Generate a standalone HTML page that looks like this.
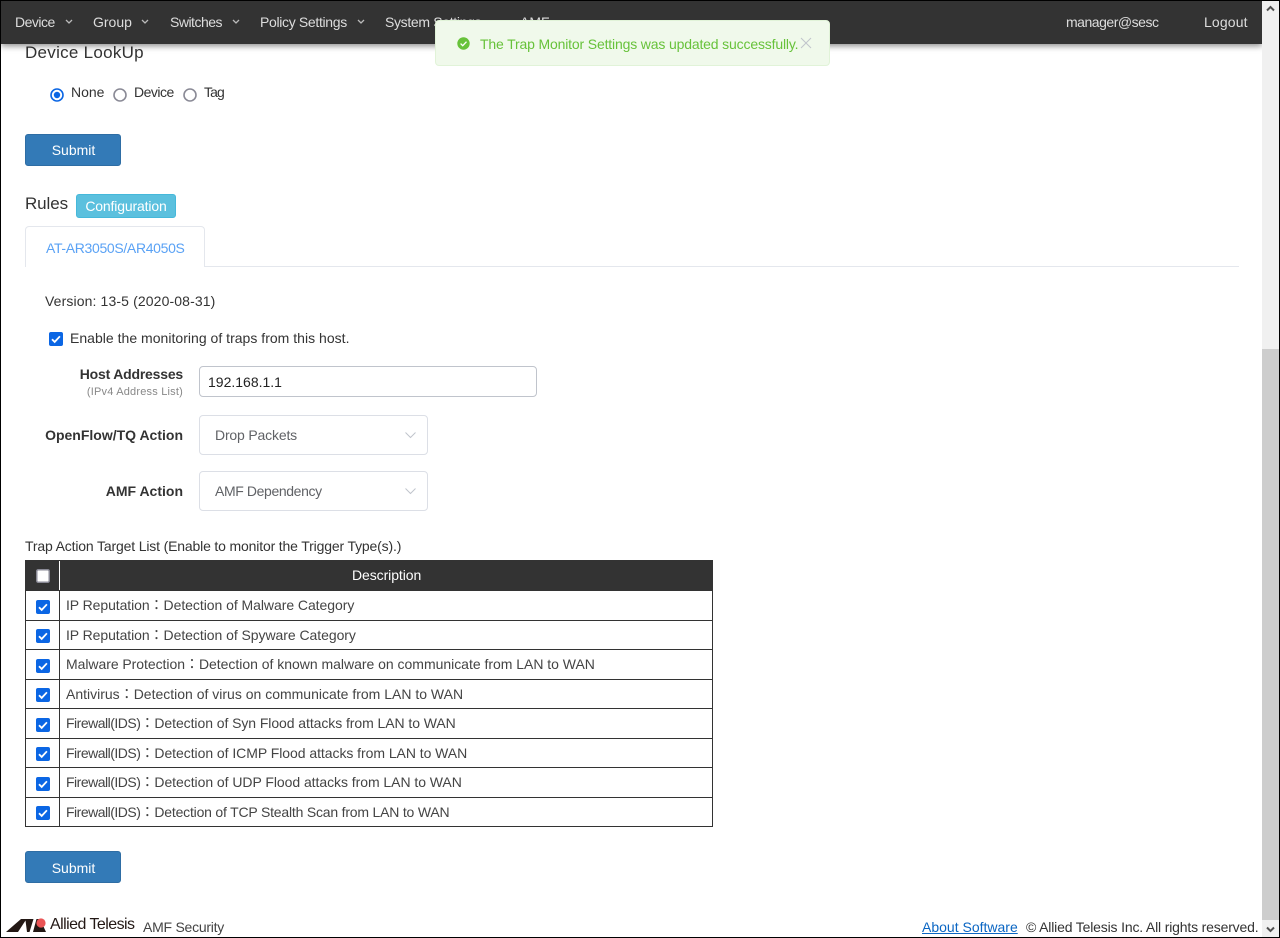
<!DOCTYPE html>
<html lang="en">
<head>
<meta charset="utf-8">
<title>AMF Security</title>
<style>
html,body{margin:0;padding:0;background:#fff;}
body{width:1280px;height:938px;position:relative;overflow:hidden;font-family:"Liberation Sans","Noto Sans CJK JP",sans-serif;font-size:14px;color:#333;}
.t{position:absolute;white-space:nowrap;line-height:20px;height:20px;}
.b{position:absolute;box-sizing:border-box;}
.nav{color:#ddd;top:12px;}
.btn{position:absolute;left:25px;width:96px;height:32px;box-sizing:border-box;background:#337ab7;border:1px solid #2e6da4;border-radius:3px;color:#fff;text-align:center;line-height:30px;padding-left:1px;}
.sel{position:absolute;left:199px;width:229px;height:40px;box-sizing:border-box;border:1px solid #dcdfe6;border-radius:4px;}
.row{position:absolute;left:25px;width:688px;height:1px;background:#333;}
.cb{position:absolute;left:36px;width:14px;height:14px;}
.rt{position:absolute;left:66px;white-space:nowrap;line-height:20px;color:#444;}
.c{display:inline-block;width:14px;text-align:center;}
.fw{letter-spacing:-.5px;}
svg{position:absolute;overflow:visible;}
</style>
</head>
<body>
<!-- device lookup sits under the fixed bar -->
<span class="t" style="left:25px;top:43px;font-size:17px;color:#333;letter-spacing:.28px;">Device LookUp</span>

<!-- top bar -->
<div class="b" style="left:1px;top:1px;width:1261px;height:43px;background:#333;box-shadow:0 2px 6px rgba(0,0,0,.45);"></div>
<span class="t nav" style="left:15px;letter-spacing:-.5px;">Device</span>
<svg style="left:65px;top:19px" width="8" height="6"><path d="M1 1l3 3 3-3" fill="none" stroke="#bbb" stroke-width="1.3"/></svg>
<span class="t nav" style="left:93px;">Group</span>
<svg style="left:141px;top:19px" width="8" height="6"><path d="M1 1l3 3 3-3" fill="none" stroke="#bbb" stroke-width="1.3"/></svg>
<span class="t nav" style="left:170px;letter-spacing:-.5px;">Switches</span>
<svg style="left:232px;top:19px" width="8" height="6"><path d="M1 1l3 3 3-3" fill="none" stroke="#bbb" stroke-width="1.3"/></svg>
<span class="t nav" style="left:260px;letter-spacing:-.33px;">Policy Settings</span>
<svg style="left:357px;top:19px" width="8" height="6"><path d="M1 1l3 3 3-3" fill="none" stroke="#bbb" stroke-width="1.3"/></svg>
<span class="t nav" style="left:385px;letter-spacing:-.33px;">System Settings</span>
<span class="t nav" style="left:520px;">AMF</span>
<span class="t nav" style="left:1066px;letter-spacing:-.48px;">manager@sesc</span>
<span class="t nav" style="left:1204px;letter-spacing:.15px;">Logout</span>

<!-- toast -->
<div class="b" style="left:435px;top:20px;width:395px;height:46px;background:#f0f9eb;border:1px solid #e1f3d8;border-radius:4px;"></div>
<svg style="left:457px;top:37px" width="13" height="13" viewBox="0 0 13 13"><circle cx="6.5" cy="6.5" r="6.2" fill="#67c23a"/><path d="M3.6 6.6l2.1 2.1 3.8-4" fill="none" stroke="#fff" stroke-width="1.3"/></svg>
<span class="t" style="left:480px;top:34px;color:#67c23a;letter-spacing:-.16px;">The Trap Monitor Settings was updated successfully.</span>
<svg style="left:801px;top:38px" width="10" height="10"><path d="M0 0l10 10M10 0L0 10" stroke="#c0c4cc" stroke-width="1"/></svg>

<!-- device lookup controls -->
<svg style="left:50px;top:88px" width="14" height="14"><circle cx="7" cy="7" r="6" fill="#fff" stroke="#0b66e4" stroke-width="1.6"/><circle cx="7" cy="7" r="3.2" fill="#0b66e4"/></svg>
<span class="t" style="left:71px;top:82px;">None</span>
<svg style="left:113px;top:88px" width="14" height="14"><circle cx="7" cy="7" r="6" fill="#fff" stroke="#8a8a96" stroke-width="1.6"/></svg>
<span class="t" style="left:134px;top:82px;letter-spacing:-.5px;">Device</span>
<svg style="left:183px;top:88px" width="14" height="14"><circle cx="7" cy="7" r="6" fill="#fff" stroke="#8a8a96" stroke-width="1.6"/></svg>
<span class="t" style="left:204px;top:82px;letter-spacing:-.9px;">Tag</span>
<div class="btn" style="top:134px;">Submit</div>

<!-- rules -->
<span class="t" style="left:25px;top:194px;font-size:17px;letter-spacing:-.1px;">Rules</span>
<div class="b" style="left:76px;top:194px;width:100px;height:24px;background:#5bc0de;border:1px solid #46b8da;border-radius:3px;color:#fff;text-align:center;line-height:22px;letter-spacing:-.15px;">Configuration</div>
<div class="b" style="left:25px;top:266px;width:1214px;height:1px;background:#e4e7ed;"></div>
<div class="b" style="left:25px;top:226px;width:180px;height:41px;background:#fff;border:1px solid #e4e7ed;border-bottom:0;border-radius:4px 4px 0 0;"></div>
<span class="t" style="left:46px;top:238px;color:#5aa2f5;letter-spacing:-.33px;">AT-AR3050S/AR4050S</span>
<span class="t" style="left:45px;top:291px;letter-spacing:.12px;">Version: 13-5 (2020-08-31)</span>

<svg style="left:49px;top:332px" width="14" height="14" viewBox="0 0 14 14"><rect width="14" height="14" rx="2" fill="#0b66e4"/><path d="M3 7.2l2.7 2.7 5.2-5.6" fill="none" stroke="#fff" stroke-width="1.8"/></svg>
<span class="t" style="left:70px;top:328px;letter-spacing:.02px;">Enable the monitoring of traps from this host.</span>

<span class="t" style="right:1097px;top:364px;font-weight:bold;letter-spacing:-.2px;">Host Addresses</span>
<span class="t" style="right:1097px;top:382px;font-size:11px;color:#888;letter-spacing:.2px;">(IPv4 Address List)</span>
<div class="b" style="left:199px;top:366px;width:338px;height:31px;border:1px solid #c0c4cc;border-radius:4px;"></div>
<span class="t" style="left:208px;top:372px;font-size:14px;color:#222;">192.168.1.1</span>

<span class="t" style="right:1097px;top:425px;font-weight:bold;">OpenFlow/TQ Action</span>
<div class="sel" style="top:415px;"></div>
<span class="t" style="left:215px;top:425px;color:#606266;letter-spacing:-.17px;">Drop Packets</span>
<svg style="left:405px;top:432px" width="11" height="7"><path d="M.5 .5l5 5 5-5" fill="none" stroke="#c0c4cc" stroke-width="1"/></svg>

<span class="t" style="right:1097px;top:481px;font-weight:bold;">AMF Action</span>
<div class="sel" style="top:471px;"></div>
<span class="t" style="left:215px;top:481px;color:#606266;letter-spacing:-.38px;">AMF Dependency</span>
<svg style="left:405px;top:488px" width="11" height="7"><path d="M.5 .5l5 5 5-5" fill="none" stroke="#c0c4cc" stroke-width="1"/></svg>

<!-- table -->
<span class="t" style="left:25px;top:536px;letter-spacing:-.16px;">Trap Action Target List (Enable to monitor the Trigger Type(s).)</span>
<div class="b" style="left:25px;top:560px;width:688px;height:31px;background:#333;"></div>
<div class="b" style="left:59px;top:561px;width:1px;height:29px;background:#fff;"></div>
<div class="b" style="left:25px;top:590px;width:1px;height:237px;background:#333;"></div>
<div class="b" style="left:59px;top:590px;width:1px;height:237px;background:#333;"></div>
<div class="b" style="left:712px;top:590px;width:1px;height:237px;background:#333;"></div>
<div class="row" style="top:620px;"></div>
<div class="row" style="top:649px;"></div>
<div class="row" style="top:679px;"></div>
<div class="row" style="top:708px;"></div>
<div class="row" style="top:738px;"></div>
<div class="row" style="top:767px;"></div>
<div class="row" style="top:797px;"></div>
<div class="row" style="top:826px;"></div>
<svg class="cb" style="top:569px" viewBox="0 0 14 14"><rect x=".75" y=".75" width="12.5" height="12.5" rx="1.5" fill="#fff" stroke="#8a8a96" stroke-width="1.5"/></svg>
<span class="t" style="left:352px;top:565px;color:#fff;letter-spacing:-.08px;">Description</span>

<svg class="cb" style="top:600px" viewBox="0 0 14 14"><rect width="14" height="14" rx="2" fill="#0b66e4"/><path d="M3 7.2l2.7 2.7 5.2-5.6" fill="none" stroke="#fff" stroke-width="1.8"/></svg>
<span class="rt" style="top:595px;"><span style="letter-spacing:-.08px;">IP Reputation</span><span class="c">：</span><span style="letter-spacing:-.05px;">Detection of Malware Category</span></span>
<svg class="cb" style="top:629px" viewBox="0 0 14 14"><rect width="14" height="14" rx="2" fill="#0b66e4"/><path d="M3 7.2l2.7 2.7 5.2-5.6" fill="none" stroke="#fff" stroke-width="1.8"/></svg>
<span class="rt" style="top:625px;"><span style="letter-spacing:-.08px;">IP Reputation</span><span class="c">：</span><span style="letter-spacing:-.05px;">Detection of Spyware Category</span></span>
<svg class="cb" style="top:659px" viewBox="0 0 14 14"><rect width="14" height="14" rx="2" fill="#0b66e4"/><path d="M3 7.2l2.7 2.7 5.2-5.6" fill="none" stroke="#fff" stroke-width="1.8"/></svg>
<span class="rt" style="top:654px;"><span style="letter-spacing:-.05px;">Malware Protection</span><span class="c">：</span><span style="letter-spacing:-.02px;">Detection of known malware on communicate from LAN to WAN</span></span>
<svg class="cb" style="top:688px" viewBox="0 0 14 14"><rect width="14" height="14" rx="2" fill="#0b66e4"/><path d="M3 7.2l2.7 2.7 5.2-5.6" fill="none" stroke="#fff" stroke-width="1.8"/></svg>
<span class="rt" style="top:684px;">Antivirus<span class="c">：</span>Detection of virus on communicate from LAN to WAN</span>
<svg class="cb" style="top:718px" viewBox="0 0 14 14"><rect width="14" height="14" rx="2" fill="#0b66e4"/><path d="M3 7.2l2.7 2.7 5.2-5.6" fill="none" stroke="#fff" stroke-width="1.8"/></svg>
<span class="rt" style="top:713px;"><span class="fw">Firewall(IDS)</span><span class="c">：</span><span style="letter-spacing:-.07px;">Detection of Syn Flood attacks from LAN to WAN</span></span>
<svg class="cb" style="top:747px" viewBox="0 0 14 14"><rect width="14" height="14" rx="2" fill="#0b66e4"/><path d="M3 7.2l2.7 2.7 5.2-5.6" fill="none" stroke="#fff" stroke-width="1.8"/></svg>
<span class="rt" style="top:743px;"><span class="fw">Firewall(IDS)</span><span class="c">：</span><span style="letter-spacing:-.05px;">Detection of ICMP Flood attacks from LAN to WAN</span></span>
<svg class="cb" style="top:777px" viewBox="0 0 14 14"><rect width="14" height="14" rx="2" fill="#0b66e4"/><path d="M3 7.2l2.7 2.7 5.2-5.6" fill="none" stroke="#fff" stroke-width="1.8"/></svg>
<span class="rt" style="top:772px;"><span class="fw">Firewall(IDS)</span><span class="c">：</span><span style="letter-spacing:-.05px;">Detection of UDP Flood attacks from LAN to WAN</span></span>
<svg class="cb" style="top:806px" viewBox="0 0 14 14"><rect width="14" height="14" rx="2" fill="#0b66e4"/><path d="M3 7.2l2.7 2.7 5.2-5.6" fill="none" stroke="#fff" stroke-width="1.8"/></svg>
<span class="rt" style="top:802px;"><span class="fw">Firewall(IDS)</span><span class="c">：</span><span style="letter-spacing:-.2px;">Detection of TCP Stealth Scan from LAN to WAN</span></span>

<div class="btn" style="top:851px;line-height:32px;">Submit</div>

<!-- footer -->
<svg style="left:6px;top:917px" width="40" height="15" viewBox="0 0 40 15">
<path d="M0 15L15 2H34L40 15z" fill="#231815"/>
<path d="M12 15L19.5 3.5 21 15zM23.5 15L27.5 2H30.5L27 15z" fill="#fff"/>
<circle cx="35" cy="6" r="4.6" fill="#ea5455"/>
</svg>
<span class="t" style="left:50px;top:915px;font-size:16px;letter-spacing:-.55px;color:#231815;">Allied Telesis</span>
<span class="t" style="left:143px;top:917px;color:#444;letter-spacing:-.25px;">AMF Security</span>
<a class="t" style="left:922px;top:917px;color:#0b66c3;text-decoration:underline;">About Software</a>
<span class="t" style="left:1026px;top:917px;color:#333;letter-spacing:-.17px;">© Allied Telesis Inc. All rights reserved.</span>

<!-- scrollbar -->
<div class="b" style="left:1262px;top:1px;width:17px;height:936px;background:#f0f0f0;"></div>
<div class="b" style="left:1262px;top:349px;width:17px;height:571px;background:#cdcdcd;"></div>
<svg style="left:1266px;top:5px" width="9" height="7"><path d="M1 5.5l3.5-3.5 3.5 3.5" fill="none" stroke="#505050" stroke-width="2"/></svg>
<svg style="left:1266px;top:926px" width="9" height="7"><path d="M1 1.5l3.5 3.5 3.5-3.5" fill="none" stroke="#505050" stroke-width="2"/></svg>

<!-- window border -->
<div class="b" style="left:0;top:0;width:1280px;height:938px;border:1px solid #000;z-index:9;pointer-events:none;"></div>
</body>
</html>
